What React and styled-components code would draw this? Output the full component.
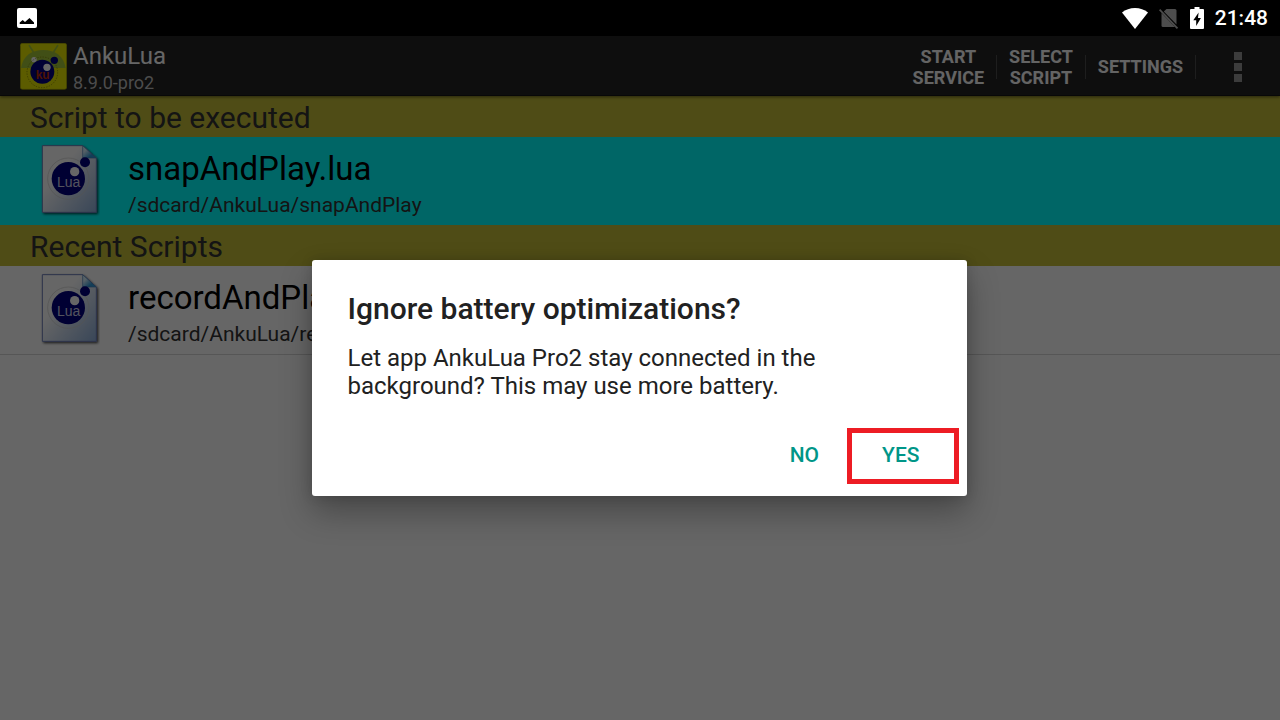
import styled, { createGlobalStyle } from "styled-components";

const GlobalStyle=createGlobalStyle`
    *{
        box-sizing: border-box;
    }
    body{
        margin: 0;
        font-family: Roboto, "Liberation Sans", sans-serif;
        background: rgb(255,255,255);
    }
    h1,h2,h3,p,ul{
        margin: 0;
        padding: 0;
        font-weight: 400;
    }
    button{
        font-family: inherit;
        border: none;
        background: none;
        cursor: pointer;
    }
`

const recent=[
    { name: 'recordAndPlay.lua', path: '/sdcard/AnkuLua/recordAndPlay' },
]

const PictureIcon=()=>(
    <svg width="20" height="20" viewBox="0 0 20 20">
        <rect width="20" height="20" rx="2" fill="#fff"/>
        <path d="M2.700 16v-1.500l3-2.500 2.300 2L12.500 10 17 14.500V16z" fill="#000"/>
    </svg>
)

const WifiIcon=()=>(
    <svg width="26" height="21" viewBox="0 0 26 21">
        <path d="M0 4.600C3.600 1.600 8 0 13 0s9.400 1.600 13 4.600L13 21z" fill="#fff"/>
    </svg>
)

const NoSimIcon=()=>(
    <svg width="20" height="21" viewBox="0 0 20 21">
        <path d="M7.500 1H16a1.500 1.500 0 0 1 1.500 1.500V16.500L4.800 3.600z" fill="#4d4d4d"/>
        <path d="M2.500 5l13.500 14H4a1.500 1.500 0 0 1-1.500-1.500z" fill="#4d4d4d"/>
        <path d="M.6 1.700L18.500 20.300" stroke="#4d4d4d" strokeWidth="1.800"/>
    </svg>
)

const BatteryIcon=()=>(
    <svg width="14" height="22" viewBox="0 0 14 22">
        <path d="M4.500 0h5v2H13a1 1 0 0 1 1 1v18a1 1 0 0 1-1 1H1a1 1 0 0 1-1-1V3a1 1 0 0 1 1-1h3.500z" fill="#fff"/>
        <path d="M8.600 5.500L3.300 13.200H6.200V19l4.700-8H8z" fill="#000"/>
    </svg>
)

const AppIcon=()=>(
    <svg width="47" height="47" viewBox="0 0 141 141">
        <rect x="1" y="1" width="139" height="138" rx="6" fill="#e6e600" stroke="#a8a800" strokeWidth="2"/>
        <path d="M28 8l14 22M113 8L99 30" stroke="#a4c639" strokeWidth="5" strokeLinecap="round"/>
        <path d="M3 75C8 40 34 21 70 21s62 19 67 54z" fill="#a4c639"/>
        <circle cx="42" cy="50" r="8" fill="#fff"/>
        <circle cx="67" cy="88" r="46" fill="none" stroke="#757500" strokeWidth="2" strokeDasharray="4 4"/>
        <circle cx="67" cy="86" r="36" fill="#000080"/>
        <circle cx="81" cy="73" r="11" fill="#fff"/>
        <circle cx="103" cy="52" r="11" fill="#000080"/>
        <text x="68" y="108" textAnchor="middle" fontFamily="Liberation Sans, sans-serif" fontWeight="700" fontSize="36" fill="#c03000">ku</text>
    </svg>
)

const LuaIcon=()=>(
    <svg width="64" height="76" viewBox="0 0 192 228">
        <defs>
            <linearGradient id="sheet" x1="0" y1="0" x2="1" y2="1">
                <stop offset="0.350" stopColor="#fff"/>
                <stop offset="1" stopColor="#8fb0dc"/>
            </linearGradient>
            <linearGradient id="fold" x1="0" y1="0" x2="1" y2="1">
                <stop offset="0.300" stopColor="#d8f2ff"/>
                <stop offset="0.700" stopColor="#2f9bdc"/>
            </linearGradient>
            <filter id="shade" x="-10%" y="-10%" width="125%" height="125%">
                <feDropShadow dx="4" dy="4" stdDeviation="3" floodColor="#000" floodOpacity="0.700"/>
            </filter>
        </defs>
        <path d="M19 8h121l41 37v163H19z" fill="url(#sheet)" stroke="#6f7fb8" strokeWidth="3" filter="url(#shade)"/>
        <path d="M140 8l41 37h-41z" fill="url(#fold)" stroke="#4a7fb8" strokeWidth="2"/>
        <circle cx="97" cy="107" r="62" fill="none" stroke="#cfcfcf" strokeWidth="2"/>
        <circle cx="97" cy="107" r="50" fill="#000080"/>
        <circle cx="116" cy="86" r="14" fill="#fff"/>
        <circle cx="147" cy="58" r="15" fill="#000080"/>
        <text x="98" y="132" textAnchor="middle" fontFamily="Liberation Sans, sans-serif" fontSize="42" fill="#d0d0e8">Lua</text>
    </svg>
)

const Script=({ name,path,active })=>(
    <Row $active={active}>
        <LuaIcon/>
        <div>
            <FileName>{name}</FileName>
            <FilePath>{path}</FilePath>
        </div>
    </Row>
)

const App=()=>{
    return(
        <Screen>
            <GlobalStyle/>
            <StatusBar>
                <PictureIcon/>
                <Signals>
                    <WifiIcon/>
                    <NoSimIcon/>
                    <BatteryIcon/>
                    <Clock>21:48</Clock>
                </Signals>
            </StatusBar>
            <Main>
                <AppBar>
                    <AppIcon/>
                    <Titles>
                        <AppName>AnkuLua</AppName>
                        <Version>8.9.0-pro2</Version>
                    </Titles>
                    <Action>START<br/>SERVICE</Action>
                    <Action>SELECT<br/>SCRIPT</Action>
                    <Action>SETTINGS</Action>
                    <More aria-label="More options">
                        <span/><span/><span/>
                    </More>
                </AppBar>
                <Heading>Script to be executed</Heading>
                <List>
                    <Script name="snapAndPlay.lua" path="/sdcard/AnkuLua/snapAndPlay" active/>
                </List>
                <Heading>Recent Scripts</Heading>
                <List>
                    {recent.map((item)=><Script key={item.path} {...item}/>)}
                </List>
                <Scrim>
                    <Dialog role="dialog" aria-labelledby="dialog-title">
                        <DialogTitle id="dialog-title">Ignore battery optimizations?</DialogTitle>
                        <Message>Let app AnkuLua Pro2 stay connected in the background? This may use more battery.</Message>
                        <Buttons>
                            <DialogButton>NO</DialogButton>
                            <DialogButton $marked>YES</DialogButton>
                        </Buttons>
                    </Dialog>
                </Scrim>
            </Main>
        </Screen>
    )
}

const Screen=styled.div`
    display: flex;
    flex-direction: column;
    min-height: 100vh;
`

const StatusBar=styled.header`
    display: flex;
    align-items: center;
    justify-content: space-between;
    height: 36px;
    padding: 0 12px 0 17px;
    background: rgb(0,0,0);
`

const Signals=styled.div`
    display: flex;
    align-items: center;
    gap: 11px;
`

const Clock=styled.span`
    padding-top: 1px;
    font-size: 21px;
    line-height: 25px;
    font-weight: 500;
    color: rgb(255,255,255);
`

const Main=styled.main`
    position: relative;
    flex: 1;
`

const AppBar=styled.div`
    display: flex;
    align-items: center;
    height: 60px;
    padding: 2px 0 0 20px;
    background: rgb(35,35,35);
    border-bottom: 1px solid rgb(20,20,20);
    box-shadow: 0 1px 3px rgba(0,0,0,0.5);
    position: relative;
`

const Titles=styled.div`
    flex: 1;
    padding: 2px 0 0 6px;
    color: rgb(255,255,255);
`

const AppName=styled.h1`
    font-size: 24px;
    line-height: 28px;
`

const Version=styled.p`
    font-size: 18px;
    line-height: 21px;
    padding-top: 2px;
    color: rgb(190,190,190);
`

const Action=styled.button`
    display: flex;
    align-items: center;
    min-height: 24px;
    padding: 0 0 0 12px;
    font-size: 18px;
    line-height: 21px;
    font-weight: 700;
    text-align: center;
    color: rgb(250,250,250);
    &:after{
        content: "";
        width: 1px;
        height: 24px;
        margin-left: 12px;
        background: rgb(75,75,75);
    }
`

const More=styled.button`
    display: flex;
    flex-direction: column;
    align-items: center;
    gap: 3px;
    width: 84px;
    padding: 0;
    span{
        width: 8px;
        height: 8px;
        background: rgb(150,150,150);
    }
`

const Heading=styled.h2`
    padding: 4px 30px 2px;
    font-size: 30px;
    line-height: 35px;
    color: rgb(50,50,50);
    background: rgb(197,190,57);
`

const List=styled.ul`
    list-style: none;
`

const Row=styled.li`
    display: flex;
    align-items: flex-start;
    gap: 28px;
    padding: 6px 36px;
    background: ${(props)=>props.$active ? 'rgb(0,255,255)' : 'rgb(255,255,255)'};
    box-shadow: ${(props)=>props.$active ? 'none' : '0 1px 0 rgb(215,215,215)'};
`

const FileName=styled.h3`
    padding-top: 6px;
    font-size: 33px;
    line-height: 39px;
    color: rgb(0,0,0);
`

const FilePath=styled.p`
    padding-top: 5px;
    font-size: 21px;
    line-height: 25px;
    color: rgb(50,50,50);
`

const Scrim=styled.div`
    position: absolute;
    inset: 0;
    display: flex;
    align-items: center;
    justify-content: center;
    padding-right: 2px;
    background: rgba(0,0,0,0.6);
`

const Dialog=styled.section`
    width: 100%;
    max-width: 655px;
    padding: 31px 8px 12px 36px;
    border-radius: 3px;
    background: rgb(255,255,255);
    box-shadow: 0 16px 32px rgba(0,0,0,0.3), 0 0 12px rgba(0,0,0,0.15);
`

const DialogTitle=styled.h2`
    font-size: 30px;
    line-height: 35px;
    font-weight: 500;
    color: rgb(33,33,33);
`

const Message=styled.p`
    padding: 18px 28px 28px 0;
    font-size: 24px;
    line-height: 28px;
    color: rgb(33,33,33);
`

const Buttons=styled.div`
    display: flex;
    justify-content: flex-end;
    gap: 16px;
`

const DialogButton=styled.button`
    height: 56px;
    padding: ${(props)=>props.$marked ? '0 34px 2px 30px' : '0 12px 2px'};
    border: ${(props)=>props.$marked ? '5px solid rgb(237,28,36)' : 'none'};
    font-size: 21px;
    line-height: 25px;
    font-weight: 500;
    color: rgb(0,150,136);
`

export default App
